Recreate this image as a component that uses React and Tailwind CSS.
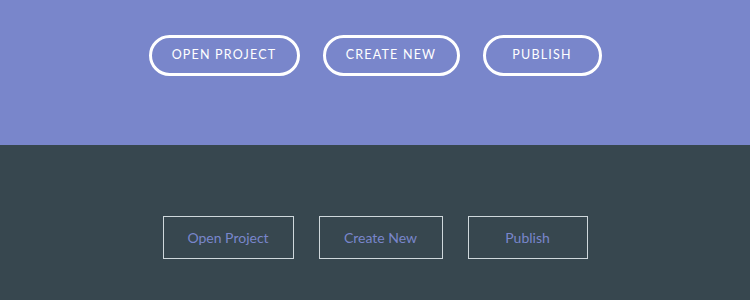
export default function App() {
  const font = { fontFamily: 'Lato, "Open Sans", sans-serif' };
  return (
    <div className="w-[750px] h-[300px] flex flex-col" style={font}>
      <div className="h-[145px] bg-[#7986cb] flex justify-center items-start pt-[35px] gap-[23px]">
        <button className="h-[41px] w-[151px] rounded-full border-[3px] border-white text-white text-[12.5px] font-normal tracking-[1.2px] uppercase">Open Project</button>
        <button className="h-[41px] w-[137px] rounded-full border-[3px] border-white text-white text-[12.5px] font-normal tracking-[1.2px] uppercase">Create New</button>
        <button className="h-[41px] w-[119px] rounded-full border-[3px] border-white text-white text-[12.5px] font-normal tracking-[1.2px] uppercase">Publish</button>
      </div>
      <div className="flex-1 bg-[#37474f] flex justify-center items-start pt-[71px] gap-[25px]">
        <button className="h-[43px] w-[131px] border border-[#cfd8dc] text-[#7986cb] text-[14px]">Open Project</button>
        <button className="h-[43px] w-[124px] border border-[#cfd8dc] text-[#7986cb] text-[14px]">Create New</button>
        <button className="h-[43px] w-[120px] border border-[#cfd8dc] text-[#7986cb] text-[14px]">Publish</button>
      </div>
    </div>
  );
}
